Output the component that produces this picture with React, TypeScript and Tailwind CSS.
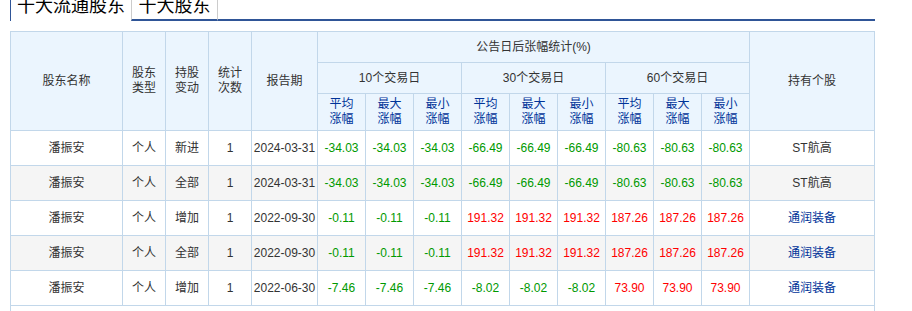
import React from 'react';

type Row = {
  name: string;
  type: string;
  change: string;
  count: string;
  date: string;
  vals: number[];
  stock: string;
  link: boolean;
};

const rows: Row[] = [
  { name: '潘振安', type: '个人', change: '新进', count: '1', date: '2024-03-31', vals: [-34.03, -34.03, -34.03, -66.49, -66.49, -66.49, -80.63, -80.63, -80.63], stock: 'ST航高', link: false },
  { name: '潘振安', type: '个人', change: '全部', count: '1', date: '2024-03-31', vals: [-34.03, -34.03, -34.03, -66.49, -66.49, -66.49, -80.63, -80.63, -80.63], stock: 'ST航高', link: false },
  { name: '潘振安', type: '个人', change: '增加', count: '1', date: '2022-09-30', vals: [-0.11, -0.11, -0.11, 191.32, 191.32, 191.32, 187.26, 187.26, 187.26], stock: '通润装备', link: true },
  { name: '潘振安', type: '个人', change: '全部', count: '1', date: '2022-09-30', vals: [-0.11, -0.11, -0.11, 191.32, 191.32, 191.32, 187.26, 187.26, 187.26], stock: '通润装备', link: true },
  { name: '潘振安', type: '个人', change: '增加', count: '1', date: '2022-06-30', vals: [-7.46, -7.46, -7.46, -8.02, -8.02, -8.02, 73.9, 73.9, 73.9], stock: '通润装备', link: true },
];

const th = 'border border-[#c2d7ea] bg-[#ebf5fe] font-normal text-[#333] p-0';
const td = 'border border-[#c2d7ea] p-0 text-center h-[35px]';

const App: React.FC = () => {
  return (
    <div
      className="w-[912px] h-[311px] overflow-hidden bg-white text-[12px] text-[#333]"
      style={{ fontFamily: '"Liberation Sans", Arial, "Noto Sans CJK SC", sans-serif' }}
    >
      <div className="flex ml-[10px] w-[865px] h-[21px]">
        <div className="w-[121px] border-l border-[#2f5597] bg-white flex items-end justify-center">
          <span className="text-[18px] leading-[18px] pb-[6px] text-black">十大流通股东</span>
        </div>
        <div className="w-[87px] border-l border-r border-[#cccccc] border-b-2 border-b-[#2f5597] flex items-end justify-center">
          <span className="text-[18px] leading-[18px] pb-[4px] text-black">十大股东</span>
        </div>
        <div className="flex-1 border-b-2 border-[#2f5597]" />
      </div>

      <table className="ml-[10px] mt-[10px] w-[865px] table-fixed border-collapse leading-[15px]">
        <colgroup>
          <col className="w-[112px]" />
          <col className="w-[43px]" />
          <col className="w-[43px]" />
          <col className="w-[43px]" />
          <col className="w-[66px]" />
          {Array.from({ length: 9 }).map((_, i) => (
            <col key={i} className="w-[48px]" />
          ))}
          <col />
        </colgroup>
        <thead>
          <tr className="h-[31px]">
            <th rowSpan={3} className={th}>股东名称</th>
            <th rowSpan={3} className={th}>股东<br />类型</th>
            <th rowSpan={3} className={th}>持股<br />变动</th>
            <th rowSpan={3} className={th}>统计<br />次数</th>
            <th rowSpan={3} className={th}>报告期</th>
            <th colSpan={9} className={th}>公告日后张幅统计(%)</th>
            <th rowSpan={3} className={th}>持有个股</th>
          </tr>
          <tr className="h-[31px]">
            <th colSpan={3} className={th}>10个交易日</th>
            <th colSpan={3} className={th}>30个交易日</th>
            <th colSpan={3} className={th}>60个交易日</th>
          </tr>
          <tr className="h-[37px]">
            {['平均', '最大', '最小', '平均', '最大', '最小', '平均', '最大', '最小'].map((t, i) => (
              <th key={i} className={`${th} text-[#003399]`}>
                {t}<br />涨幅
              </th>
            ))}
          </tr>
        </thead>
        <tbody>
          {rows.map((r, i) => (
            <tr key={i} className={i % 2 === 1 ? 'bg-[#f5f5f5]' : 'bg-white'}>
              <td className={td}>{r.name}</td>
              <td className={td}>{r.type}</td>
              <td className={td}>{r.change}</td>
              <td className={td}>{r.count}</td>
              <td className={td}>{r.date}</td>
              {r.vals.map((v, j) => (
                <td key={j} className={`${td} ${v < 0 ? 'text-[#009900]' : 'text-[#ff0000]'}`}>
                  {v.toFixed(2)}
                </td>
              ))}
              <td className={`${td} ${r.link ? 'text-[#003399]' : ''}`}>{r.stock}</td>
            </tr>
          ))}
          <tr>
            <td colSpan={15} className={td}>&nbsp;</td>
          </tr>
        </tbody>
      </table>
    </div>
  );
};

export default App;
